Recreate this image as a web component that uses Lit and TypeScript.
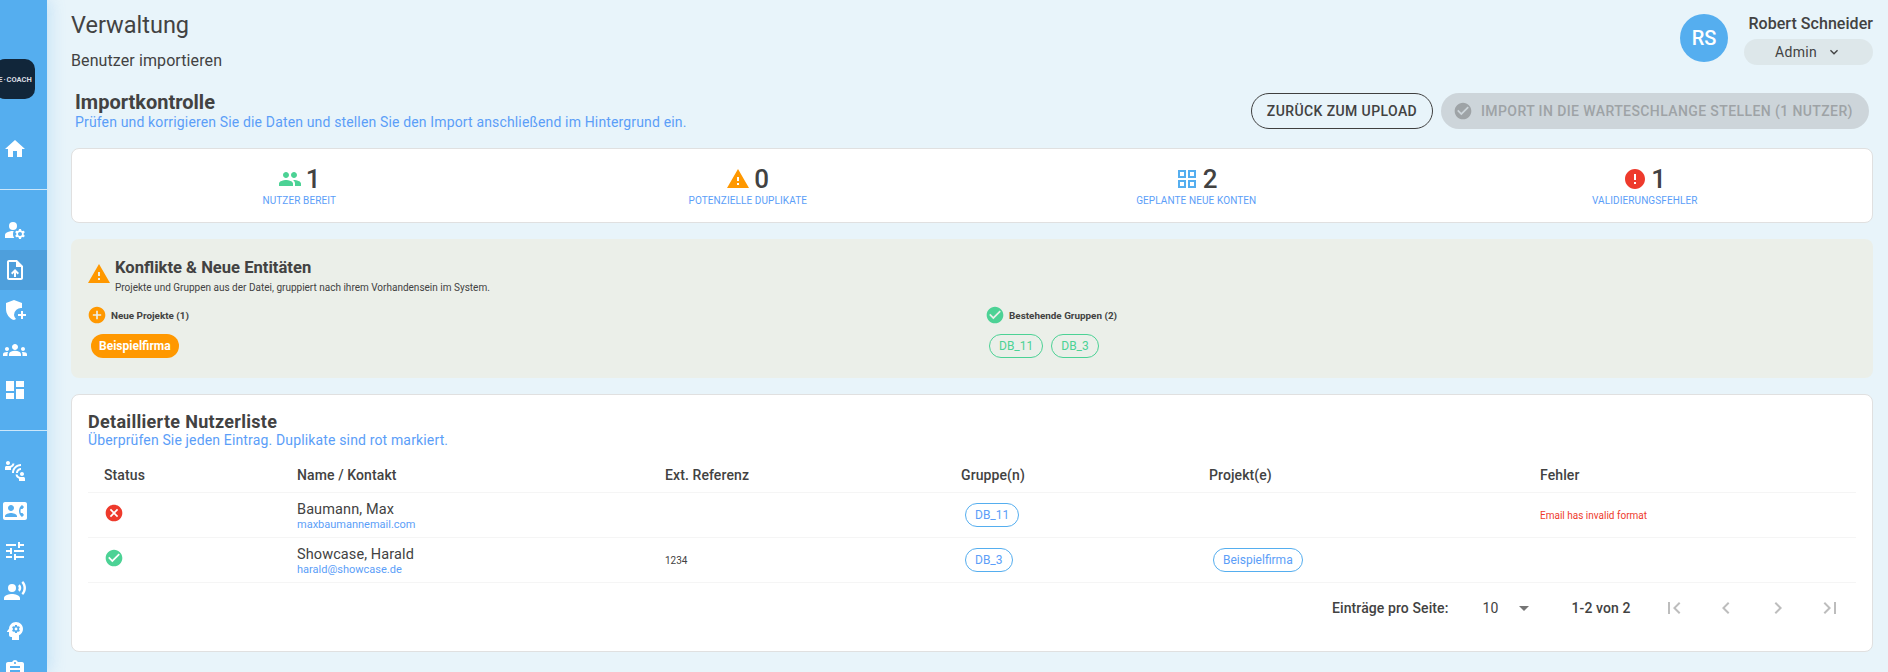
import { LitElement, css, html, svg } from "lit";
import { customElement } from "lit/decorators.js";

const paths: Record<string, unknown> = {
  home: svg`<path d="M10 20v-6h4v6h5v-8h3L12 3 2 12h3v8z"/>`,
  manage: svg`<path d="M10 4a4 4 0 100 8 4 4 0 000-8z"/><path d="M10.67 13.02C10.45 13.01 10.23 13 10 13c-2.42 0-4.68.67-6.61 1.82C2.51 15.34 2 16.32 2 17.35V20h9.26c-.79-1.13-1.26-2.51-1.26-4 0-1.07.25-2.07.67-2.98z"/><path d="M20.75 16c0-.22-.03-.42-.06-.63l1.14-1.01-1-1.73-1.45.49c-.32-.27-.68-.48-1.08-.63L18 11h-2l-.3 1.49c-.4.15-.76.36-1.08.63l-1.45-.49-1 1.73 1.14 1.01c-.03.21-.06.41-.06.63s.03.42.06.63l-1.14 1.01 1 1.73 1.45-.49c.32.27.68.48 1.08.63L16 21h2l.3-1.49c.4-.15.76-.36 1.08-.63l1.45.49 1-1.73-1.14-1.01c.03-.21.06-.41.06-.63zM17 18c-1.1 0-2-.9-2-2s.9-2 2-2 2 .9 2 2-.9 2-2 2z"/>`,
  upload: svg`<path d="M14 2H6c-1.1 0-1.99.9-1.99 2L4 20c0 1.1.89 2 1.99 2H18c1.1 0 2-.9 2-2V8l-6-6zm4 18H6V4h7v5h5v11zM8 15.01l1.41 1.41L11 14.84V19h2v-4.16l1.59 1.59L16 15.01 12.01 11z"/>`,
  shield: svg`<path d="M11 2L3 5v6c0 5 3.4 9.8 8 11 .8-.2 1.4-.5 2-.9A6.9 6.9 0 0 1 11 17a7 7 0 0 1 8-6.9V5z"/><path d="M18 13v3h-3v2h3v3h2v-3h3v-2h-3v-3z"/>`,
  groups: svg`<path d="M4 13c1.1 0 2-.9 2-2s-.9-2-2-2-2 .9-2 2 .9 2 2 2zm1.13 1.1c-.37-.06-.74-.1-1.13-.1-.99 0-1.93.21-2.78.58C.48 14.9 0 15.62 0 16.43V18h4.5v-1.61c0-.83.23-1.61.63-2.29zM20 13c1.1 0 2-.9 2-2s-.9-2-2-2-2 .9-2 2 .9 2 2 2zm4 3.43c0-.81-.48-1.53-1.22-1.85-.85-.37-1.79-.58-2.78-.58-.39 0-.76.04-1.13.1.4.68.63 1.46.63 2.29V18H24v-1.57zm-7.76-2.78c-1.17-.52-2.61-.9-4.24-.9-1.63 0-3.07.39-4.24.9C6.68 14.13 6 15.21 6 16.39V18h12v-1.61c0-1.18-.68-2.26-1.76-2.74zM12 12c1.66 0 3-1.34 3-3s-1.34-3-3-3-3 1.34-3 3 1.34 3 3 3z"/>`,
  dashboard: svg`<path d="M3 13h8V3H3v10zm0 8h8v-6H3v6zm10 0h8V11h-8v10zm0-18v6h8V3h-8z"/>`,
  connect: svg`<path d="M11 14H9c0-4.97 4.03-9 9-9v2c-3.87 0-7 3.13-7 7zm7-3V9c-2.76 0-5 2.24-5 5h2c0-1.66 1.34-3 3-3zM7 4c0-1.11-.89-2-2-2s-2 .89-2 2 .89 2 2 2 2-.89 2-2zm4.45.5h-2C9.21 5.92 7.99 7 6.5 7h-3C2.67 7 2 7.67 2 8.5V11h6V8.74c1.86-.59 3.25-2.27 3.45-4.24zM19 17c1.11 0 2-.89 2-2s-.89-2-2-2-2 .89-2 2 .89 2 2 2zm1.5 1h-3c-1.49 0-2.71-1.08-2.95-2.5h-2c.2 1.97 1.59 3.65 3.45 4.24V22h6v-2.5c0-.83-.67-1.5-1.5-1.5z"/>`,
  contact: svg`<path d="M22 3H2C.9 3 0 3.9 0 5v14c0 1.1.9 2 2 2h20c1.1 0 1.99-.9 1.99-2L24 5c0-1.1-.9-2-2-2zM8 6c1.66 0 3 1.34 3 3s-1.34 3-3 3-3-1.34-3-3 1.34-3 3-3zm6 12H2v-1c0-2 4-3.1 6-3.1s6 1.1 6 3.1v1zm3.85-4h1.64L21 16l-1.99 1.99c-1.31-.98-2.28-2.38-2.73-3.99-.18-.64-.28-1.31-.28-2s.1-1.36.28-2c.45-1.62 1.42-3.01 2.73-3.99L21 8l-1.51 2h-1.64c-.22.63-.35 1.3-.35 2s.13 1.37.35 2z"/>`,
  tune: svg`<path d="M3 17v2h6v-2H3zM3 5v2h10V5H3zm10 16v-2h8v-2h-8v-2h-2v6h2zM7 9v2H3v2h4v2h2V9H7zm14 4v-2H11v2h10zm-6-4h2V7h4V5h-4V3h-2v6z"/>`,
  voice: svg`<circle cx="9" cy="9" r="4"/><path d="M9 15c-2.67 0-8 1.34-8 4v2h16v-2c0-2.66-5.33-4-8-4zm7.76-9.64l-1.68 1.69c.84 1.18.84 2.71 0 3.89l1.68 1.69c2.02-2.02 2.02-5.07 0-7.27zM20.07 2l-1.63 1.63c2.77 3.02 2.77 7.56 0 10.74L20.07 16c3.9-3.89 3.91-9.95 0-14z"/>`,
  psychology: svg`<path d="M13 8.57c-.79 0-1.43.64-1.43 1.43s.64 1.43 1.43 1.43 1.43-.64 1.43-1.43-.64-1.43-1.43-1.43z"/><path d="M13 3C9.25 3 6.2 5.94 6.02 9.64L4.1 12.2c-.25.33-.01.8.4.8H6v3c0 1.1.9 2 2 2h1v3h7v-4.68c2.36-1.12 4-3.53 4-6.32 0-3.87-3.13-7-7-7zm3 7c0 .13-.01.26-.02.39l.83.66c.08.06.1.16.05.25l-.8 1.39c-.05.09-.16.12-.24.09l-.99-.4c-.21.16-.43.29-.67.39L14 13.83c-.01.1-.1.17-.2.17h-1.6c-.1 0-.18-.07-.2-.17l-.15-1.06c-.25-.1-.47-.23-.68-.39l-.99.4c-.09.03-.2 0-.25-.09l-.8-1.39c-.05-.08-.03-.19.05-.25l.84-.66c-.01-.13-.02-.26-.02-.39s.02-.27.04-.39l-.85-.66c-.08-.06-.1-.16-.05-.26l.8-1.38c.05-.09.15-.12.24-.09l1 .4c.2-.15.43-.29.67-.39L12 6.17c.02-.1.1-.17.2-.17h1.6c.1 0 .18.07.2.17l.15 1.06c.24.1.46.23.67.39l1-.4c.09-.03.2 0 .24.09l.8 1.38c.05.09.03.2-.05.26l-.85.66c.03.12.04.25.04.39z"/>`,
  assignment: svg`<path d="M19 3h-4.18C14.4 1.84 13.3 1 12 1c-1.3 0-2.4.84-2.82 2H5c-1.1 0-2 .9-2 2v14c0 1.1.9 2 2 2h14c1.1 0 2-.9 2-2V5c0-1.1-.9-2-2-2zm-7 0c.55 0 1 .45 1 1s-.45 1-1 1-1-.45-1-1 .45-1 1-1zm2 14H7v-2h7v2zm3-4H7v-2h10v2zm0-4H7V7h10v2z"/>`,
  people: svg`<path d="M16 11c1.66 0 2.99-1.34 2.99-3S17.66 5 16 5c-1.66 0-3 1.34-3 3s1.34 3 3 3zm-8 0c1.66 0 2.99-1.34 2.99-3S9.66 5 8 5C6.34 5 5 6.34 5 8s1.34 3 3 3zm0 2c-2.33 0-7 1.17-7 3.5V19h14v-2.5c0-2.33-4.67-3.5-7-3.5zm8 0c-.29 0-.62.02-.97.05 1.16.84 1.97 1.97 1.97 3.45V19h6v-2.5c0-2.33-4.67-3.5-7-3.5z"/>`,
  warning: svg`<path d="M1 21h22L12 2 1 21zm12-3h-2v-2h2v2zm0-4h-2v-4h2v4z"/>`,
  grid: svg`<path d="M3 3v8h8V3H3zm6 6H5V5h4v4zm-6 4v8h8v-8H3zm6 6H5v-4h4v4zm4-16v8h8V3h-8zm6 6h-4V5h4v4zm-6 4v8h8v-8h-8zm6 6h-4v-4h4v4z"/>`,
  error: svg`<path d="M12 2C6.48 2 2 6.48 2 12s4.48 10 10 10 10-4.48 10-10S17.52 2 12 2zm1 15h-2v-2h2v2zm0-4h-2V7h2v6z"/>`,
  check: svg`<path d="M12 2C6.48 2 2 6.48 2 12s4.48 10 10 10 10-4.48 10-10S17.52 2 12 2zm-2 15l-5-5 1.41-1.41L10 14.17l7.59-7.59L19 8l-9 9z"/>`,
  cancel: svg`<path d="M12 2C6.47 2 2 6.47 2 12s4.47 10 10 10 10-4.47 10-10S17.53 2 12 2zm5 13.59L15.59 17 12 13.41 8.41 17 7 15.59 10.59 12 7 8.41 8.41 7 12 10.59 15.59 7 17 8.41 13.41 12 17 15.59z"/>`,
  add: svg`<path d="M12 2C6.48 2 2 6.48 2 12s4.48 10 10 10 10-4.48 10-10S17.52 2 12 2zm5 11h-4v4h-2v-4H7v-2h4V7h2v4h4v2z"/>`,
  chevron: svg`<path d="M7.41 8.59L12 13.17l4.59-4.58L18 10l-6 6-6-6z"/>`,
  first: svg`<path d="M18.41 16.59L13.82 12l4.59-4.59L17 6l-6 6 6 6zM6 6h2v12H6z"/>`,
  prev: svg`<path d="M15.41 7.41L14 6l-6 6 6 6 1.41-1.41L10.83 12z"/>`,
  next: svg`<path d="M10 6L8.59 7.41 13.17 12l-4.58 4.59L10 18l6-6z"/>`,
  last: svg`<path d="M5.59 7.41L10.18 12l-4.59 4.59L7 18l6-6-6-6zM16 6h2v12h-2z"/>`,
};

const icon = (name: string, size: number, color = "currentColor") =>
  html`<svg class="icon" width="${size}" height="${size}" viewBox="0 0 24 24" fill="${color}">${paths[name]}</svg>`;

const nav1 = ["manage", "upload", "shield", "groups", "dashboard"];
const nav2 = ["connect", "contact", "tune", "voice", "psychology", "assignment"];

const stats = [
  { icon: "people", color: "#4cd295", value: "1", label: "NUTZER BEREIT" },
  { icon: "warning", color: "#ff9800", value: "0", label: "POTENZIELLE DUPLIKATE" },
  { icon: "grid", color: "#55aeef", value: "2", label: "GEPLANTE NEUE KONTEN" },
  { icon: "error", color: "#ee3a2c", value: "1", label: "VALIDIERUNGSFEHLER" },
];

const rows = [
  { ok: false, name: "Baumann, Max", mail: "maxbaumannemail.com", ref: "", group: "DB_11", project: "", error: "Email has invalid format" },
  { ok: true, name: "Showcase, Harald", mail: "harald@showcase.de", ref: "1234", group: "DB_3", project: "Beispielfirma", error: "" },
];

@customElement("app-root")
export class AppRoot extends LitElement {
  static styles = css`
    :host {
      display: block;
      height: 672px;
      overflow: hidden;
      font-family: Roboto, "Liberation Sans", sans-serif;
      color: #424242;
      background: #e8f4fa;
    }
    .icon {
      display: block;
      flex: none;
    }
    .shell {
      display: flex;
      height: 672px;
    }
    .side {
      flex: none;
      width: 47px;
      height: 672px;
      overflow: hidden;
      background: #55aeef;
      color: #fff;
      box-shadow: 4px 0 14px rgba(85, 174, 239, 0.22);
      clip-path: inset(0 -20px 0 0);
    }
    .logo {
      width: 40px;
      height: 40px;
      margin-top: 59px;
      margin-left: -5px;
      border-radius: 10px;
      background: #11263a;
      color: #d8dde2;
      font-size: 7.5px;
      font-weight: 700;
      word-spacing: -1px;
      display: flex;
      align-items: center;
      justify-content: center;
      white-space: nowrap;
    }
    .nav-item {
      width: 30px;
      height: 40px;
      display: flex;
      align-items: center;
      justify-content: center;
    }
    .home {
      margin-top: 30px;
    }
    .rule {
      height: 1px;
      margin: 20px 0;
      background: rgba(255, 255, 255, 0.7);
    }
    .nav-item.active {
      width: 47px;
      padding-right: 17px;
      box-sizing: border-box;
      background: #4e9fdc;
    }
    .main {
      flex: 1;
      min-width: 0;
      padding: 0 15px 0 24px;
    }
    .top {
      display: flex;
      justify-content: space-between;
      height: 93px;
    }
    .page-title {
      font-size: 23.5px;
      line-height: 28px;
      margin-top: 11px;
    }
    .page-sub {
      font-size: 16px;
      line-height: 20px;
      margin-top: 12px;
      letter-spacing: 0.1px;
    }
    .user {
      display: flex;
      gap: 16px;
      margin-top: 14px;
    }
    .avatar {
      width: 48px;
      height: 48px;
      border-radius: 50%;
      background: #55aeef;
      color: #fff;
      font-size: 20px;
      font-weight: 500;
      display: flex;
      align-items: center;
      justify-content: center;
    }
    .user-name {
      font-size: 16px;
      font-weight: 500;
      line-height: 20px;
      text-align: right;
      letter-spacing: 0.05px;
    }
    .role {
      width: 129px;
      height: 26px;
      margin-top: 5px;
      border-radius: 13px;
      background: #dde7ea;
      display: flex;
      align-items: center;
      justify-content: center;
      gap: 9px;
      font-size: 14px;
      letter-spacing: 0.3px;
    }
    .head-row {
      display: flex;
      justify-content: space-between;
      align-items: flex-start;
      height: 55px;
      padding-left: 4px;
    }
    .head-title {
      font-size: 20px;
      font-weight: 700;
      line-height: 24px;
      margin-top: -3px;
    }
    .blue {
      color: #5b9ef8;
      font-size: 14px;
      line-height: 16px;
      letter-spacing: 0.15px;
    }
    .actions {
      display: flex;
      gap: 8px;
      padding-right: 4px;
    }
    .btn {
      height: 36px;
      box-sizing: border-box;
      border-radius: 18px;
      display: flex;
      align-items: center;
      font-size: 14px;
      font-weight: 500;
      letter-spacing: 0.4px;
    }
    .btn.outline {
      width: 182px;
      justify-content: center;
      border: 1px solid #3f3f3f;
    }
    .btn.disabled {
      width: 428px;
      gap: 8px;
      padding-left: 12px;
      background: #cdd5da;
      color: #9ea3a6;
    }
    .card {
      background: #fff;
      border: 1px solid #e0e0e0;
      border-radius: 8px;
      box-sizing: border-box;
    }
    .stats {
      height: 75px;
      display: grid;
      grid-template-columns: repeat(4, 1fr);
      padding: 0 3px;
      margin-bottom: 16px;
    }
    .stat {
      display: flex;
      flex-direction: column;
      align-items: center;
      padding-top: 18px;
    }
    .stat-top {
      display: flex;
      align-items: center;
      gap: 4px;
      height: 24px;
      font-size: 26px;
      font-weight: 500;
    }
    .stat-label {
      margin-top: 4px;
      font-size: 10px;
      line-height: 12px;
      color: #5b9ef8;
      letter-spacing: 0.1px;
    }
    .conflicts {
      height: 139px;
      box-sizing: border-box;
      background: #ebefe9;
      border-radius: 8px;
      padding: 18px 16px 0;
      margin-bottom: 16px;
    }
    .conf-head {
      display: flex;
      gap: 4px;
    }
    .conf-head .icon {
      margin-top: 5px;
    }
    .conf-title {
      font-size: 16.6px;
      font-weight: 700;
      line-height: 22px;
    }
    .conf-sub {
      font-size: 10px;
      line-height: 14px;
      margin-top: 2px;
    }
    .conf-grid {
      display: grid;
      grid-template-columns: 898px 1fr;
      margin-top: 10px;
    }
    .conf-label {
      display: flex;
      align-items: center;
      gap: 4px;
      height: 20px;
      font-size: 9.9px;
      font-weight: 700;
    }
    .pills {
      display: flex;
      gap: 8px;
      margin-top: 9px;
      padding-left: 4px;
    }
    .pill {
      height: 24px;
      box-sizing: border-box;
      border-radius: 12px;
      display: flex;
      align-items: center;
      padding: 0 9px;
      font-size: 12px;
      line-height: 14px;
    }
    .pill.orange {
      background: #ff9800;
      color: #fff;
      font-weight: 700;
      padding: 0 8px;
    }
    .pill.green {
      border: 1px solid #4cd295;
      color: #4cd295;
    }
    .pill.blue-pill {
      border: 1px solid #55aeef;
      color: #5b9ef8;
      display: inline-flex;
    }
    .list {
      height: 258px;
      padding: 16px 16px 0;
    }
    .list-title {
      font-size: 18px;
      font-weight: 700;
      line-height: 21px;
      letter-spacing: 0.3px;
    }
    .table {
      margin-top: 9px;
    }
    .tr {
      display: grid;
      grid-template-columns: 193px 368px 296px 248px 331px 1fr;
      align-items: center;
      height: 45px;
      border-bottom: 1px solid #f5f5f5;
      box-sizing: border-box;
    }
    .tr.th {
      height: 36px;
      font-size: 14px;
      font-weight: 500;
      letter-spacing: 0.1px;
    }
    .tr > div {
      padding-left: 16px;
    }
    .tr > .pill-cell {
      padding-left: 20px;
    }
    .status-cell {
      padding-bottom: 4px;
    }
    .tr > .name-cell {
      padding-top: 2px;
    }
    .name {
      font-size: 14.5px;
      line-height: 17px;
      letter-spacing: 0.1px;
    }
    .mail {
      font-size: 11px;
      line-height: 13px;
      color: #5b9ef8;
    }
    .small {
      font-size: 10px;
    }
    .err {
      font-size: 10px;
      color: #ee3a2c;
    }
    .pager {
      display: flex;
      align-items: center;
      height: 50px;
      font-size: 14px;
      font-weight: 500;
      letter-spacing: 0.1px;
      padding-left: 1244px;
    }
    .pager-size {
      margin-left: 34px;
      width: 37px;
      font-weight: 400;
    }
    .caret {
      width: 0;
      height: 0;
      border-left: 5px solid transparent;
      border-right: 5px solid transparent;
      border-top: 5px solid #757575;
    }
    .pager-range {
      margin-left: 42px;
      width: 91px;
    }
    .pager-nav {
      display: flex;
      gap: 28px;
      color: #bdbdbd;
    }
  `;

  render() {
    return html`
      <div class="shell">
        <nav class="side">
          <div class="logo">E · COACH</div>
          <div class="nav-item home">${icon("home", 24)}</div>
          <div class="rule"></div>
          ${nav1.map((n) => html`<div class="nav-item ${n === "upload" ? "active" : ""}">${icon(n, 24)}</div>`)}
          <div class="rule"></div>
          ${nav2.map((n) => html`<div class="nav-item">${icon(n, 24)}</div>`)}
        </nav>
        <main class="main">
          <div class="top">
            <div>
              <div class="page-title">Verwaltung</div>
              <div class="page-sub">Benutzer importieren</div>
            </div>
            <div class="user">
              <div class="avatar">RS</div>
              <div>
                <div class="user-name">Robert Schneider</div>
                <div class="role">Admin ${icon("chevron", 16)}</div>
              </div>
            </div>
          </div>
          <div class="head-row">
            <div>
              <div class="head-title">Importkontrolle</div>
              <div class="blue">Prüfen und korrigieren Sie die Daten und stellen Sie den Import anschließend im Hintergrund ein.</div>
            </div>
            <div class="actions">
              <div class="btn outline">ZURÜCK ZUM UPLOAD</div>
              <div class="btn disabled">${icon("check", 20)} IMPORT IN DIE WARTESCHLANGE STELLEN (1 NUTZER)</div>
            </div>
          </div>
          <section class="card stats">
            ${stats.map(
              (s) => html`<div class="stat">
                <div class="stat-top">${icon(s.icon, 24, s.color)}<span>${s.value}</span></div>
                <div class="stat-label">${s.label}</div>
              </div>`
            )}
          </section>
          <section class="conflicts">
            <div class="conf-head">
              ${icon("warning", 24, "#ff9800")}
              <div>
                <div class="conf-title">Konflikte &amp; Neue Entitäten</div>
                <div class="conf-sub">Projekte und Gruppen aus der Datei, gruppiert nach ihrem Vorhandensein im System.</div>
              </div>
            </div>
            <div class="conf-grid">
              <div>
                <div class="conf-label">${icon("add", 20, "#ff9800")} Neue Projekte (1)</div>
                <div class="pills"><span class="pill orange">Beispielfirma</span></div>
              </div>
              <div>
                <div class="conf-label">${icon("check", 20, "#4cd295")} Bestehende Gruppen (2)</div>
                <div class="pills"><span class="pill green">DB_11</span><span class="pill green">DB_3</span></div>
              </div>
            </div>
          </section>
          <section class="card list">
            <div class="list-title">Detaillierte Nutzerliste</div>
            <div class="blue">Überprüfen Sie jeden Eintrag. Duplikate sind rot markiert.</div>
            <div class="table">
              <div class="tr th">
                <div>Status</div><div>Name / Kontakt</div><div>Ext. Referenz</div><div>Gruppe(n)</div><div>Projekt(e)</div><div>Fehler</div>
              </div>
              ${rows.map(
                (r) => html`<div class="tr">
                  <div class="status-cell">${r.ok ? icon("check", 20, "#4cd295") : icon("cancel", 20, "#ee3a2c")}</div>
                  <div class="name-cell"><div class="name">${r.name}</div><div class="mail">${r.mail}</div></div>
                  <div class="small">${r.ref}</div>
                  <div class="pill-cell"><span class="pill blue-pill">${r.group}</span></div>
                  <div class="pill-cell">${r.project ? html`<span class="pill blue-pill">${r.project}</span>` : ""}</div>
                  <div class="err">${r.error}</div>
                </div>`
              )}
            </div>
            <div class="pager">
              <span>Einträge pro Seite:</span>
              <span class="pager-size">10</span>
              <span class="caret"></span>
              <span class="pager-range">1-2 von 2</span>
              <div class="pager-nav">
                ${icon("first", 24)}${icon("prev", 24)}${icon("next", 24)}${icon("last", 24)}
              </div>
            </div>
          </section>
        </main>
      </div>
    `;
  }
}
